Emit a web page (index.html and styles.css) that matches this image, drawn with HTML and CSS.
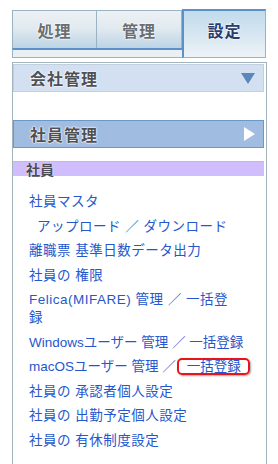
FILE: index.html
```html
<!DOCTYPE html>
<html lang="ja">
<head>
<meta charset="utf-8">
<link rel="stylesheet" href="styles.css">
</head>
<body>
<div class="tabbar">
  <div class="tab t1">処理</div>
  <div class="tab t2">管理</div>
  <div class="tab active">設定</div>
  <div class="strip"></div>
</div>
<div class="panel">
  <div class="head head-closed"><span>会社管理</span><svg class="tri" width="14" height="12" viewBox="0 0 14 12"><polygon points="0,1 14,1 7,12" fill="#5b88bb"/></svg></div>
  <div class="head head-open"><span>社員管理</span><svg class="tri" width="12" height="14" viewBox="0 0 12 14"><polygon points="1,0 12,7 1,14" fill="#ffffff"/></svg></div>
  <div class="section">社員</div>
  <ul class="links">
    <li><a>社員マスタ</a></li>
    <li class="indent"><a>アップロード ／ ダウンロード</a></li>
    <li><a>離職票 基準日数データ出力</a></li>
    <li><a>社員の 権限</a></li>
    <li><a>Felica(MIFARE) 管理 ／ 一括登<br>録</a></li>
    <li class="tight"><a>Windowsユーザー 管理 ／ 一括登録</a></li>
    <li class="tight"><a>macOSユーザー 管理 ／</a><a class="marked">一括登録</a></li>
    <li><a>社員の 承認者個人設定</a></li>
    <li><a>社員の 出勤予定個人設定</a></li>
    <li><a>社員の 有休制度設定</a></li>
  </ul>
  <div class="section next"></div>
</div>
</body>
</html>
```
FILE: styles.css
```css
html, body {
  margin: 0;
  padding: 0;
  background: #ffffff;
  overflow: hidden;
}
body {
  font-family: "Noto Sans CJK JP", "Noto Sans", sans-serif;
  width: 278px;
  height: 464px;
}
.tabbar {
  display: grid;
  grid-template-columns: 85px 85px 84px;
  grid-template-rows: 39px 10px;
  width: 254px;
  margin: 9px 0 0 12px;
}
.tab {
  display: flex;
  align-items: center;
  justify-content: center;
  font-size: 16px;
  font-weight: bold;
  letter-spacing: 1px;
  color: #6a6e72;
  text-shadow: 0 0 2px #fff, 0 0 2px #fff;
  background: linear-gradient(#ecf1f4, #e2eaf0 45%, #bcd4e6);
  border: 1px solid #9ab3c2;
  border-bottom: none;
  margin-top: 1px;
}
.t1 { grid-column: 1; grid-row: 1; }
.t2 { grid-column: 2; grid-row: 1; border-left: none; }
.tab.active {
  grid-column: 3;
  grid-row: 1 / 3;
  margin-top: 0;
  padding-bottom: 8px;
  color: #2a3b6e;
  background: linear-gradient(#c2dbec, #d3e5f1 45%, #eef3f7);
  border: 1px solid #9cb2c0;
  border-top: 2px solid #5c90c8;
  border-left: 2px solid #5c90c8;
}
.strip {
  grid-column: 1 / 3;
  grid-row: 2;
  background: #eaeff3;
  border-top: 2px solid #5c90c8;
  border-bottom: 1px solid #9cb2c0;
  border-left: 1px solid #9cb2c0;
}
.panel {
  width: 251px;
  margin: 4px 0 0 12px;
  border: 1px solid #a4b4bd;
  border-bottom: none;
  padding: 1px 2px 0 0;
  height: 420px;
}
.head {
  display: flex;
  align-items: center;
  justify-content: space-between;
  box-sizing: border-box;
  height: 28px;
  padding: 0 8px 0 16px;
  font-size: 16px;
  font-weight: bold;
  letter-spacing: 1px;
  color: #4e5054;
  text-shadow: 0 0 2px #fff, 0 0 2px #fff, 0 0 1px #fff;
}
.head-closed {
  background: #d3e0f1;
  border: 1px solid #c2cfdd;
}
.head-open {
  margin-top: 28px;
  background: #a1bce1;
  border: 1px solid #6d97c7;
}
.section {
  margin-top: 13px;
  height: 15px;
  background: #cfbdfd;
  border-top: 1px solid #c6b2f7;
  box-sizing: border-box;
  padding-left: 13px;
  font-size: 14px;
  font-weight: bold;
  line-height: 14px;
  color: #4a4a55;
  text-shadow: 0 0 2px #fff;
}
.section.next {
  margin-top: 18px;
}
.links {
  list-style: none;
  margin: 0;
  padding: 17px 4px 0 16px;
  font-family: "Liberation Sans", "Noto Sans CJK JP", sans-serif;
}
.links li {
  font-size: 13.5px;
  line-height: 18px;
  letter-spacing: 0.5px;
  margin-bottom: 6.5px;
  white-space: nowrap;
}
.links li.tight {
  letter-spacing: 0;
}
.links li.indent {
  padding-left: 8px;
}
.links a {
  color: #2557cc;
}
.marked {
  display: inline-block;
  margin-left: 1px;
  border: 2px solid #e8141c;
  border-radius: 5px;
  padding: 0 7px 0 8px;
  line-height: 13px;
  box-shadow: 1px 1px 2px rgba(0,0,0,0.35);
}
```
